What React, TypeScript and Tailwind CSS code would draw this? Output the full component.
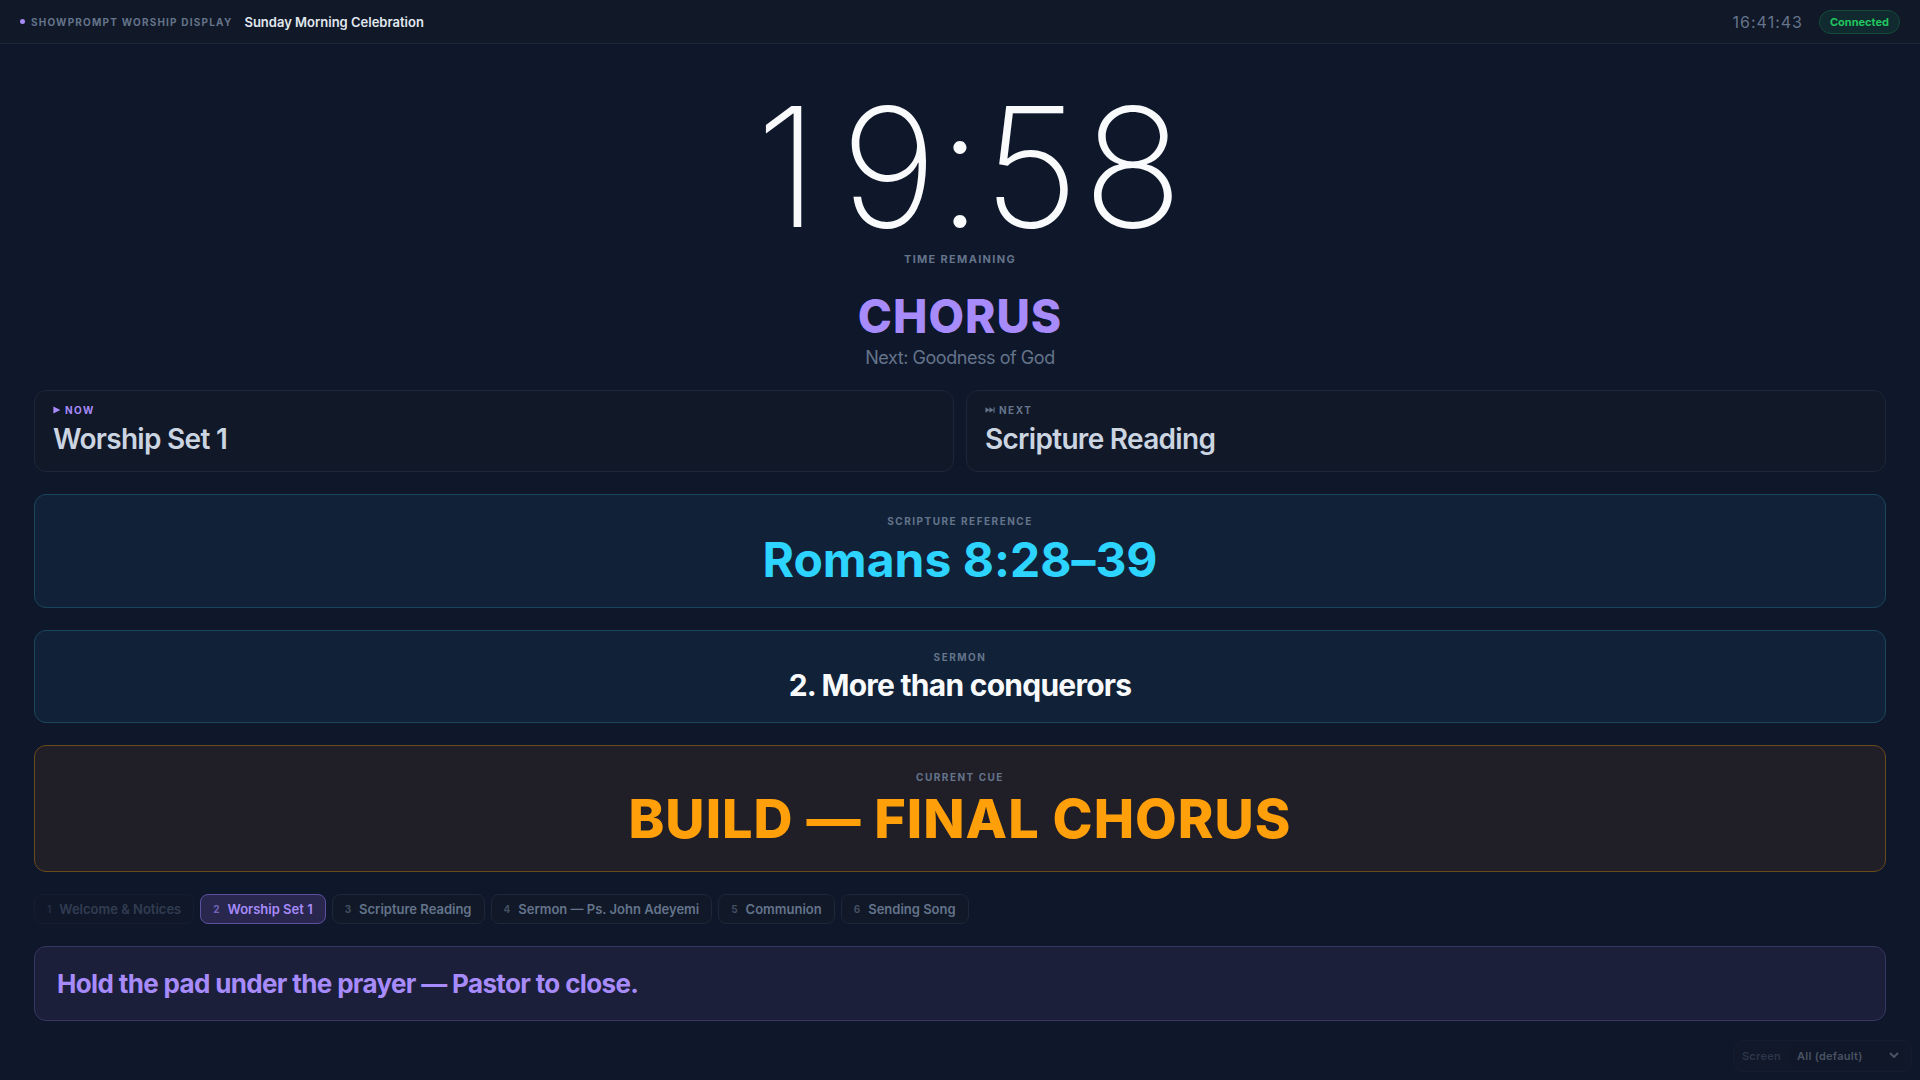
import { useState } from 'react'

interface Step {
  title: string
  state: 'done' | 'active' | 'upcoming'
}

const STEPS: Step[] = [
  { title: 'Welcome & Notices', state: 'done' },
  { title: 'Worship Set 1', state: 'active' },
  { title: 'Scripture Reading', state: 'upcoming' },
  { title: 'Sermon — Ps. John Adeyemi', state: 'upcoming' },
  { title: 'Communion', state: 'upcoming' },
  { title: 'Sending Song', state: 'upcoming' },
]

const STEP_STYLES: Record<Step['state'], string> = {
  done:     'border-[#1e293b] bg-[#111827] text-[#64748b] opacity-40',
  active:   'border-[#5c51a0] bg-[#29274d] text-[#a78bfa]',
  upcoming: 'border-[#1c2739] bg-[#111827] text-[#64748b]',
}

const LABEL = 'text-[10px] leading-4 font-bold uppercase tracking-[0.15em]'

function PlayIcon() {
  return (
    <svg viewBox="0 0 8 8" className="h-2 w-2" fill="currentColor" aria-hidden="true">
      <path d="M0.4 0.6 7.4 4 0.4 7.4Z" />
    </svg>
  )
}

function SkipIcon() {
  return (
    <svg viewBox="0 0 10 8" className="h-2 w-2.5" fill="currentColor" aria-hidden="true">
      <path d="M0.4 1.2 4.6 4 0.4 6.8ZM4.4 1.2 8.6 4 4.4 6.8ZM8.5 1.2h1.1v5.6H8.5Z" />
    </svg>
  )
}

function Header() {
  return (
    <header className="flex h-11 items-center justify-between border-b border-[#1c2a3a] bg-[#111827] px-5">
      <div className="flex items-center gap-3">
        <div className="flex items-center gap-1.5">
          <span className="h-[5px] w-[5px] rounded-full bg-[#a78bfa]" />
          <span className="text-[10px] leading-4 font-bold uppercase tracking-[0.12em] text-[#64748b]">
            ShowPrompt Worship Display
          </span>
        </div>
        <h1 className="text-[13px] leading-4 font-semibold text-[#e2e8f0]">Sunday Morning Celebration</h1>
      </div>
      <div className="flex items-center gap-4">
        <time className="text-base leading-5 font-normal tracking-[1px] text-[#64748b] [font-feature-settings:'calt'_0]">
          16:41:43
        </time>
        <span className="rounded-full border border-[#144a3a] bg-[#112a30] px-2.5 py-[3px] text-[11px] leading-4 font-bold text-[#22c55e]">
          Connected
        </span>
      </div>
    </header>
  )
}

// Each digit sits in a cell of equal width so the timer doesn't jitter as it counts
function Countdown({ value }: { value: string }) {
  return (
    <div className="flex justify-center text-[166px] leading-[166px] font-extralight text-[#f8fafc]" role="timer">
      {value.split('').map((char, i) => (
        <span key={i} className={char === ':' ? 'flex w-10 justify-center' : 'flex w-[102px] justify-center'}>
          {char}
        </span>
      ))}
    </div>
  )
}

export default function App() {
  const [screen, setScreen] = useState('all')

  return (
    <div className="min-h-screen bg-[#0f172a] font-['Inter',sans-serif]">
      <Header />

      <main className="flex flex-col gap-[22px] px-[34px] pt-10 pb-14">
        <section className="text-center">
          <Countdown value="19:58" />
          <p className="text-[11px] leading-[18px] font-bold uppercase tracking-[0.12em] text-[#64748b]">
            Time Remaining
          </p>
        </section>

        <section className="text-center">
          <h2 className="text-[46px] leading-[52px] font-extrabold tracking-[1px] text-[#a78bfa]">CHORUS</h2>
          <p className="mt-1.5 text-lg leading-5 tracking-tight text-[#64748b]">Next: Goodness of God</p>
        </section>

        {/* Now / next */}
        <section className="grid grid-cols-2 gap-3">
          <div className="rounded-xl border border-[#1c2739] bg-[#111827] px-[18px] pt-[11px] pb-[13px]">
            <p className={`${LABEL} flex items-center gap-1 text-[#a78bfa]`}>
              <PlayIcon /> Now
            </p>
            <p className="mt-0.5 text-[28px] leading-[38px] font-semibold tracking-tight text-[#cbd5e1]">Worship Set 1</p>
          </div>
          <div className="rounded-xl border border-[#1c2739] bg-[#111827] px-[18px] pt-[11px] pb-[13px]">
            <p className={`${LABEL} flex items-center gap-1 text-[#64748b]`}>
              <SkipIcon /> Next
            </p>
            <p className="mt-0.5 text-[28px] leading-[38px] font-semibold tracking-tight text-[#cbd5e1]">Scripture Reading</p>
          </div>
        </section>

        <section className="rounded-xl border border-[#1a465c] bg-[#112238] py-[18px] text-center">
          <p className={`${LABEL} text-[#64748b]`}>Scripture Reference</p>
          <p className="mt-0.5 text-5xl leading-[58px] font-bold text-[#2dd4ff] [font-feature-settings:'calt'_0]">
            Romans 8:28–39
          </p>
        </section>

        <section className="rounded-xl border border-[#1a465c] bg-[#112238] py-[18px] text-center">
          <p className={`${LABEL} text-[#64748b]`}>Sermon</p>
          <p className="mt-0.5 text-[30px] leading-[37px] font-bold tracking-tight text-[#f8fafc]">2. More than conquerors</p>
        </section>

        <section className="rounded-xl border border-[#6b4a1c] bg-[#201f28] pt-[23px] pb-[21px] text-center">
          <p className={`${LABEL} text-[#64748b]`}>Current Cue</p>
          <p className="mt-0.5 text-[54px] leading-[63px] font-extrabold tracking-[1px] text-[#ff9f0a] [font-feature-settings:'calt'_0]">
            BUILD — FINAL CHORUS
          </p>
        </section>

        {/* Running order */}
        <ol className="flex flex-wrap gap-1.5">
          {STEPS.map((step, i) => (
            <li
              key={step.title}
              className={`flex items-center gap-2 rounded-lg border px-3 py-1.5 text-[13px] leading-4 font-semibold ${STEP_STYLES[step.state]}`}
            >
              <span className="text-[10px] font-bold opacity-60">{i + 1}</span>
              {step.title}
            </li>
          ))}
        </ol>

        <section className="rounded-xl border border-[#393663] bg-[#1c1f3a] px-[22px] py-[18px]">
          <p className="text-[26px] leading-[37px] font-bold tracking-tight text-[#a78bfa] [font-feature-settings:'calt'_0]">
            Hold the pad under the prayer — Pastor to close.
          </p>
        </section>
      </main>

      {/* Screen picker */}
      <div className="fixed right-2 bottom-2 flex items-center gap-2 rounded-lg border border-[#131d30] bg-[#101829] py-[3px] px-2 text-[11px] leading-4 font-semibold">
        <label htmlFor="screen" className="tracking-wide text-[#2c3648]">Screen</label>
        <div className="relative">
          <select
            id="screen"
            value={screen}
            onChange={(e) => setScreen(e.target.value)}
            className="w-[114px] appearance-none rounded-md bg-[#0f1728] px-2 py-1 tracking-wide text-[#4a5363]"
          >
            <option value="all">All (default)</option>
            <option value="band">Band</option>
            <option value="pastor">Pastor</option>
          </select>
          <svg
            viewBox="0 0 10 6"
            className="pointer-events-none absolute top-2 right-1 h-1.5 w-2.5"
            fill="none"
            stroke="#4a5363"
            strokeWidth="2"
            aria-hidden="true"
          >
            <path d="M1 1 5 5 9 1" />
          </svg>
        </div>
      </div>
    </div>
  )
}
